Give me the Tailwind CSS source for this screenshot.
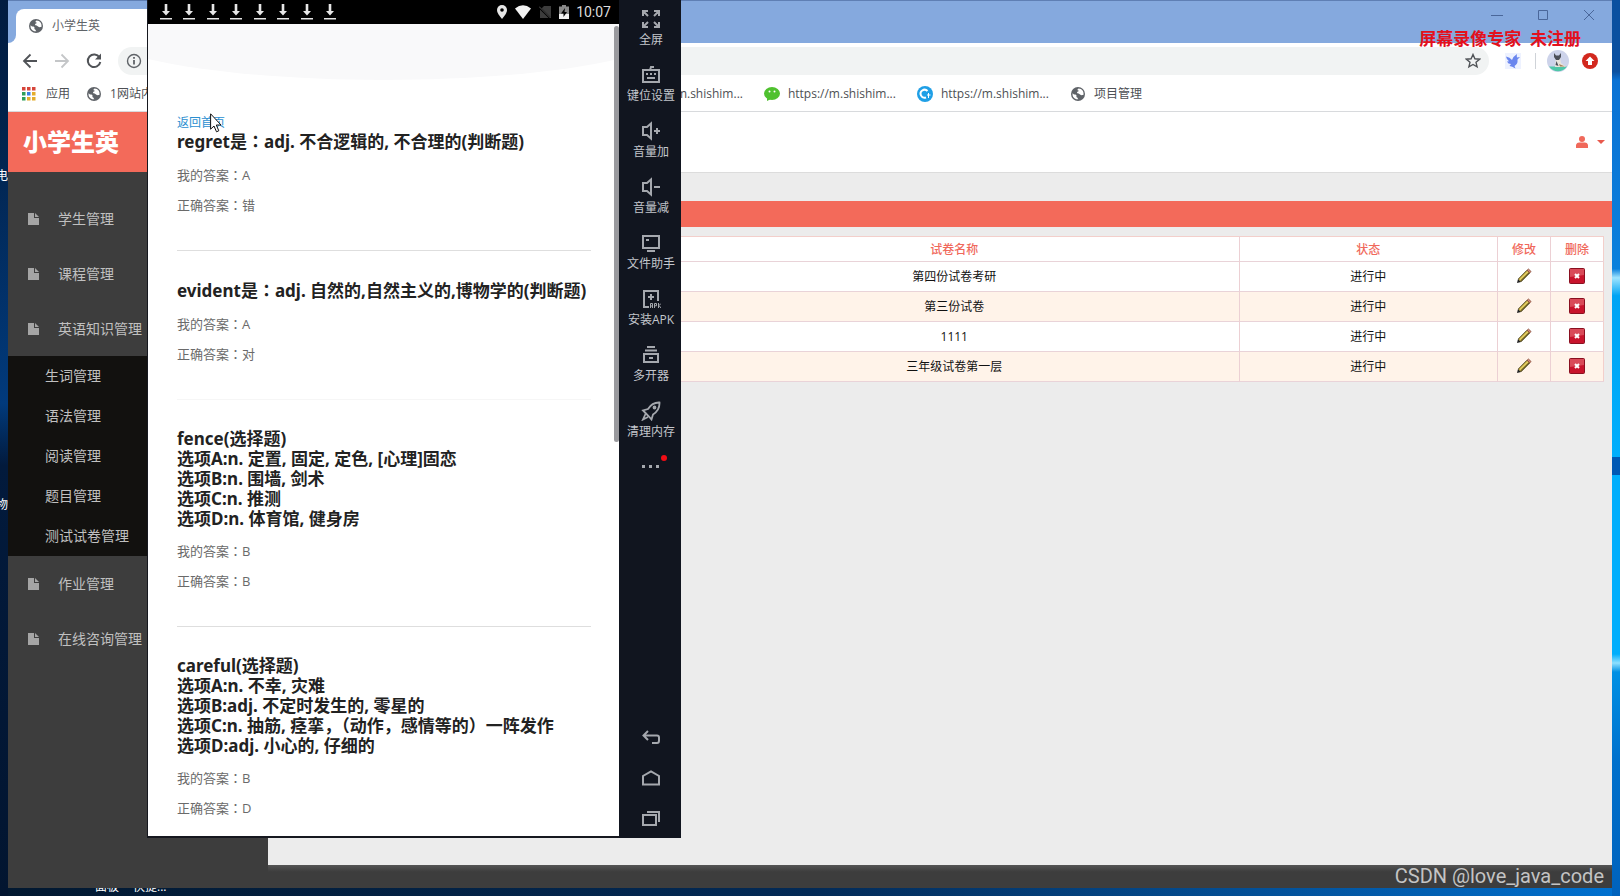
<!DOCTYPE html>
<html lang="zh-CN">
<head>
<meta charset="utf-8">
<title>小学生英</title>
<script src="https://cdn.jsdelivr.net/npm/@tailwindcss/browser@4"></script>
</head>
<body class="h-screen overflow-hidden font-['Open_Sans','Noto_Sans_CJK_SC',sans-serif] text-xs">
<svg class="hidden" aria-hidden="true">
  <symbol id="globe" viewBox="0 0 16 16"><circle cx="8" cy="8" r="7" fill="#5f6368"/><path d="M2.600 7.200c1.600 2 2.600 .6 3.600 1.800 1 1.200-.6 1.600 1 2.600 .8 .6 .4 1.400 1.200 1.600C5 13.800 2 11 2.600 7.200zM8.600 2.400c-1.800 .8-1.200 2.200.4 2.400-1.200 1.200-2.400 .6-1.800 2.400 1.200 0 2.400 .6 3.200 1.600 1 .8 2 .2 3 .2C14.200 5.500 12 2.600 8.600 2.400z" fill="#fff"/></symbol>
  <symbol id="doc" viewBox="0 0 12 14"><path d="M0 1h6v5h5v7H0zM7 1l4 4H7z" fill="#a5a5a5"/></symbol>
  <symbol id="pencil" viewBox="0 0 16 16"><path d="M1 15l1-4 3 3z" fill="#222"/><path d="M2.300 11L11 2.200l2.800 2.700-8.800 8.900z" fill="#c9ae3a" stroke="#4a4220" stroke-width=".9"/><path d="M3.500 12L12.200 3.400" stroke="#f3e48a"/><path d="M4.600 13l8.600-8.400" stroke="#4a4220"/><path d="M11 2.200L12.500 1l2.600 2.500-1.300 1.400z" fill="#d88a7a" stroke="#75402f" stroke-width=".7"/></symbol>
  <symbol id="cross" viewBox="0 0 16 16"><rect x=".5" y=".5" width="15" height="15" rx="1" fill="#c8142c" stroke="#8a1020"/><path d="M1 1h14v6L1 9z" fill="#d94a58"/><path d="M6 6l4 4M10 6l-4 4" stroke="#fff" stroke-width="2"/></symbol>
  <symbol id="dl" viewBox="0 0 12 16"><path d="M4.700 0h2.600v7H10L6 11.500 2 7h2.700zM0 14h12v1.500H0z" fill="#e6e6e6"/></symbol>
</svg>

<main class="relative h-full overflow-hidden bg-linear-to-r from-[#021830] via-[#032a56] to-[#0071d0]">
  <!-- desktop wallpaper edges -->
  <div class="absolute inset-y-0 left-0 w-2 bg-[linear-gradient(#021c40,#02234c_15%,#013a7c_45%,#021a3c_52%,#021530)]"></div>
  <div class="absolute inset-y-0 right-0 w-2 bg-[linear-gradient(#0a50a0_8%,#0a72d4_9%,#0a80dc_30%,#9fe4ff_31%,#00a4f4_33%,#00aefc_51%,#0058b4_51%,#0058b4_53%,#00aefc_53%,#00aefc_73%,#8fe0ff_74%,#0090e4_75%,#0070cc_85%,#0062bc)]"></div>
  <span class="absolute -left-1 top-[168px] leading-4 text-white">电</span>
  <span class="absolute -left-1 top-[497px] leading-4 text-white">物</span>
  <span class="absolute left-[95px] top-[879px] leading-4 text-white">面板</span>
  <span class="absolute left-[133px] top-[879px] leading-4 text-white">快捷...</span>

  <!-- browser window -->
  <section class="absolute inset-x-2 top-0 bottom-2 flex flex-col bg-white">
    <div class="flex h-[43px] shrink-0 items-end justify-between border-t border-[#5f7fb4] bg-[#85a9de]">
      <div class="flex items-end bg-white">
        <div class="h-[34px] w-2 rounded-br-lg bg-[#85a9de]"></div>
        <div class="bg-[#85a9de]">
          <div class="flex h-[34px] w-60 items-center gap-2 rounded-t-lg bg-white pl-3 text-[#5f6368]">
            <svg class="size-4"><use href="#globe"/></svg><span>小学生英</span>
          </div>
        </div>
      </div>
      <div class="flex gap-[34px] self-start pt-2 pr-[17px] text-[#4a679a]">
        <button aria-label="最小化"><svg class="size-3" viewBox="0 0 12 12" stroke="currentColor"><path d="M0 6.500h12"/></svg></button>
        <button aria-label="最大化"><svg class="size-3" viewBox="0 0 12 12" stroke="currentColor" fill="none"><path d="M1.500 1.500h9v9h-9z"/></svg></button>
        <button aria-label="关闭"><svg class="size-3" viewBox="0 0 12 12" stroke="currentColor"><path d="M1 1l10 10M11 1L1 11"/></svg></button>
      </div>
    </div>
    <div class="flex h-9 shrink-0 items-center pl-[14px] pr-[14px]">
      <div class="flex gap-4">
        <button aria-label="后退"><svg class="size-4" viewBox="0 0 16 16" fill="none" stroke="#505357" stroke-width="1.800"><path d="M15 8H2M8.500 1.500L2 8l6.500 6.500"/></svg></button>
        <button aria-label="前进"><svg class="size-4" viewBox="0 0 16 16" fill="none" stroke="#c4c6c8" stroke-width="1.800"><path d="M1 8h13M7.500 1.500L14 8l-6.500 6.500"/></svg></button>
        <button aria-label="刷新"><svg class="size-4" viewBox="0 0 16 16" fill="none" stroke="#505357" stroke-width="2"><path d="M13.500 4.500A6.300 6.300 0 1 0 14.300 9"/><path d="M15 .5v6H9z" fill="#505357" stroke="none"/></svg></button>
      </div>
      <div class="ml-4 flex h-7 flex-1 items-center justify-between rounded-full bg-[#f1f3f3] pl-2 pr-2">
        <svg class="size-4" viewBox="0 0 16 16" fill="none" stroke="#5f6368" stroke-width="1.400"><circle cx="8" cy="8" r="6.500"/><path d="M8 7v4.500M8 4v1.700" stroke-width="1.800"/></svg>
        <svg class="size-4" viewBox="0 0 16 16" fill="none" stroke="#505357" stroke-width="1.400"><path d="M8 1.500l1.900 4.300 4.700.4-3.600 3.100 1.100 4.600L8 11.500l-4.100 2.400L5 9.300 1.400 6.200l4.700-.4z"/></svg>
      </div>
      <div class="ml-4 flex items-center">
        <svg class="size-4" viewBox="0 0 16 16"><path fill="#eef2ff" d="M0 0h16v16H0z"/><path d="M1 3.500q4 .5 6 3.500 1-3.500 5-6-.5 2 0 3.500l3-.5-2.500 2.500Q13 11 9.500 13l1 2.500Q7 13 4.500 13L6 11Q3 11 2 8.500l2-.3Q1.500 6.500 1 3.500z" fill="#6a86ee"/></svg>
        <span class="ml-[14px] h-4 w-px bg-[#cfd3d8]"></span>
        <svg class="ml-[11px] size-[22px]" viewBox="0 0 22 22"><circle cx="11" cy="11" r="11" fill="#cdd3ea"/><path d="M2 16.500h18a11 11 0 0 1-18 0z" fill="#4fc7a8"/><path d="M9 8h4l1 5 5 4H8z" fill="#e9e4dc"/><path d="M7 3l2 2.500h3L14 3v4l-2 3H9L7 7zM8.500 15l1-4 2 5z" fill="#4b4f58"/><path d="M12 14l6 2.500h-5z" fill="#a8845a"/></svg>
        <svg class="ml-[13px] size-4" viewBox="0 0 16 16"><circle cx="8" cy="8" r="8" fill="#d2281e"/><path d="M8 3.500L12.500 8H10v4H6V8H3.500z" fill="#fff"/></svg>
      </div>
    </div>
    <nav class="flex h-[33px] shrink-0 items-center border-b border-[#d8dadd] pb-[6px] pl-[14px] pt-1 text-[#4d5054]" aria-label="书签">
      <a href="#" class="flex items-center gap-[10px]">
        <svg class="size-[14px]" viewBox="0 0 14 14"><path d="M0 0h3.500v3.500H0zM5 0h3.500v3.500H5zM10 0h3.500v3.500H10z" fill="#d6453a"/><path d="M0 5h3.500v3.500H0zM0 10h3.500v3.500H0z" fill="#2f9e58"/><path d="M5 5h3.500v3.500H5z" fill="#3b7de0"/><path d="M10 5h3.500v3.500H10zM5 10h3.500v3.500H5zM10 10h3.500v3.500H10z" fill="#e3ac2b"/></svg>应用</a>
      <a href="#" class="ml-4 flex items-center gap-2"><svg class="size-4"><use href="#globe"/></svg>1网站内</a>
      <div class="ml-[523px] flex items-center gap-[21px]">
        <a href="#">m.shishim...</a>
        <a href="#" class="flex items-center gap-2"><svg class="size-4" viewBox="0 0 16 16"><ellipse cx="8" cy="7.500" rx="8" ry="6.500" fill="#4fc12f"/><path d="M3 12v3l4-2z" fill="#4fc12f"/><circle cx="5.500" cy="5.500" r="1" fill="#fff"/><circle cx="10.500" cy="5.500" r="1" fill="#fff"/></svg>https://m.shishim...</a>
        <a href="#" class="flex items-center gap-2"><svg class="size-4" viewBox="0 0 16 16"><circle cx="8" cy="8" r="8" fill="#1f9fe6"/><path d="M10.500 5A4 4 0 1 0 9 11.500" fill="none" stroke="#fff" stroke-width="2"/><path d="M11.500 7v5M10 9h3.500" stroke="#fff"/></svg>https://m.shishim...</a>
        <a href="#" class="flex items-center gap-2"><svg class="size-4"><use href="#globe"/></svg>项目管理</a>
      </div>
    </nav>

    <div class="flex min-h-0 flex-1 bg-[#3d3d3d]">
      <aside class="w-[260px] shrink-0 text-sm text-[#c0c0c0]">
        <h1 class="flex h-[60px] items-center bg-[#f36a5a] pl-[15px] text-2xl font-black text-white">小学生英</h1>
        <nav class="pt-[19px]">
          <a href="#" class="flex h-[55px] items-center gap-[18px] pl-5"><svg class="h-[14px] w-3"><use href="#doc"/></svg>学生管理</a>
          <a href="#" class="flex h-[55px] items-center gap-[18px] pl-5"><svg class="h-[14px] w-3"><use href="#doc"/></svg>课程管理</a>
          <a href="#" class="flex h-[55px] items-center gap-[18px] pl-5"><svg class="h-[14px] w-3"><use href="#doc"/></svg>英语知识管理</a>
          <div class="bg-[#12110f]">
            <a href="#" class="flex h-10 items-center pl-[37px]">生词管理</a>
            <a href="#" class="flex h-10 items-center pl-[37px]">语法管理</a>
            <a href="#" class="flex h-10 items-center pl-[37px]">阅读管理</a>
            <a href="#" class="flex h-10 items-center pl-[37px]">题目管理</a>
            <a href="#" class="flex h-10 items-center pl-[37px]">测试试卷管理</a>
          </div>
          <a href="#" class="flex h-[55px] items-center gap-[18px] pl-5"><svg class="h-[14px] w-3"><use href="#doc"/></svg>作业管理</a>
          <a href="#" class="flex h-[55px] items-center gap-[18px] pl-5"><svg class="h-[14px] w-3"><use href="#doc"/></svg>在线咨询管理</a>
        </nav>
      </aside>
      <div class="flex min-w-0 flex-1 flex-col">
        <header class="flex h-[61px] shrink-0 items-center justify-end border-b border-[#dcdcdc] bg-white pr-[7px]">
          <button class="flex items-center gap-[9px]" aria-label="用户">
            <svg class="h-3 w-3" viewBox="0 0 12 12"><circle cx="6" cy="3" r="3" fill="#f0695b"/><path d="M0 12V8.500Q1 6.500 3 6.500h6q2 0 3 2V12z" fill="#f0695b"/></svg>
            <svg class="h-1 w-2" viewBox="0 0 8 4"><path d="M0 0h8L4 4z" fill="#e8594c"/></svg>
          </button>
        </header>
        <div class="flex-1 bg-[#ececec] pt-7">
          <div class="h-[26px] bg-[#f36a5a]"></div>
          <div class="pl-[10px] pr-2 pt-[9px]">
            <table class="w-full table-fixed border-collapse border border-[#f3cfcb] text-center text-[#111]">
              <colgroup><col class="w-[29.5%]"><col class="w-[43%]"><col class="w-[19.5%]"><col class="w-[4%]"><col class="w-[4%]"></colgroup>
              <thead><tr class="h-[25px] border-b border-[#e9d3d8] bg-white text-[#f0695b]">
                <th></th><th class="border-x border-[#ecd0d4] pt-[2px] font-medium">试卷名称</th><th class="border-x border-[#ecd0d4] pt-[2px] font-medium">状态</th><th class="border-x border-[#ecd0d4] pt-[2px] font-medium">修改</th><th class="pt-[2px] font-medium">删除</th></tr></thead>
              <tbody>
                <tr class="h-[30px] border-b border-[#e9d3d8] bg-white"><td></td><td class="border-x border-[#ecd0d4]">第四份试卷考研</td><td class="border-x border-[#ecd0d4]">进行中</td><td class="border-x border-[#ecd0d4] pb-[2px]"><button aria-label="修改" class="block mx-auto"><svg class="size-4"><use href="#pencil"/></svg></button></td><td class="pb-[2px]"><button aria-label="删除" class="block mx-auto"><svg class="size-4"><use href="#cross"/></svg></button></td></tr>
                <tr class="h-[30px] border-b border-[#e9d3d8] bg-[#fff3e9]"><td></td><td class="border-x border-[#ecd0d4]">第三份试卷</td><td class="border-x border-[#ecd0d4]">进行中</td><td class="border-x border-[#ecd0d4] pb-[2px]"><button aria-label="修改" class="block mx-auto"><svg class="size-4"><use href="#pencil"/></svg></button></td><td class="pb-[2px]"><button aria-label="删除" class="block mx-auto"><svg class="size-4"><use href="#cross"/></svg></button></td></tr>
                <tr class="h-[30px] border-b border-[#e9d3d8] bg-white"><td></td><td class="border-x border-[#ecd0d4]">1111</td><td class="border-x border-[#ecd0d4]">进行中</td><td class="border-x border-[#ecd0d4] pb-[2px]"><button aria-label="修改" class="block mx-auto"><svg class="size-4"><use href="#pencil"/></svg></button></td><td class="pb-[2px]"><button aria-label="删除" class="block mx-auto"><svg class="size-4"><use href="#cross"/></svg></button></td></tr>
                <tr class="h-[30px] border-b border-[#e9d3d8] bg-[#fff3e9]"><td></td><td class="border-x border-[#ecd0d4]">三年级试卷第一层</td><td class="border-x border-[#ecd0d4]">进行中</td><td class="border-x border-[#ecd0d4] pb-[2px]"><button aria-label="修改" class="block mx-auto"><svg class="size-4"><use href="#pencil"/></svg></button></td><td class="pb-[2px]"><button aria-label="删除" class="block mx-auto"><svg class="size-4"><use href="#cross"/></svg></button></td></tr>
              </tbody>
            </table>
          </div>
        </div>
        <div class="h-[23px] shrink-0 bg-linear-to-b from-[#555] to-[#3d3d3d] to-30%"></div>
      </div>
    </div>
  </section>

  <!-- phone emulator window -->
  <section class="absolute bottom-[58px] left-[147px] top-0 flex w-[534px] border-l border-[#16181f] bg-[#16181f]">
    <div class="flex min-w-0 flex-1 flex-col pb-[2px]">
      <div class="flex h-6 shrink-0 items-center justify-between bg-black pl-3 pr-2 font-['Roboto',sans-serif] text-[#dcdcdc]">
        <div class="flex w-44 justify-between">
          <svg class="h-4 w-3"><use href="#dl"/></svg><svg class="h-4 w-3"><use href="#dl"/></svg><svg class="h-4 w-3"><use href="#dl"/></svg><svg class="h-4 w-3"><use href="#dl"/></svg><svg class="h-4 w-3"><use href="#dl"/></svg><svg class="h-4 w-3"><use href="#dl"/></svg><svg class="h-4 w-3"><use href="#dl"/></svg><svg class="h-4 w-3"><use href="#dl"/></svg>
        </div>
        <div class="flex items-center">
          <svg class="h-[14px] w-[10px]" viewBox="0 0 10 14"><path d="M5 0a5 5 0 0 1 5 5c0 3.500-5 9-5 9S0 8.500 0 5a5 5 0 0 1 5-5z" fill="#e6e6e6"/><circle cx="5" cy="5" r="1.800" fill="#000"/></svg>
          <svg class="ml-2 h-[14px] w-4" viewBox="0 0 16 14"><path d="M8 14L0 3.500Q8-3 16 3.500z" fill="#f2f2f2"/></svg>
          <svg class="ml-2 size-3" viewBox="0 0 12 12"><path d="M5 0h7v12H1V4z" fill="#3c3c3c"/><path d="M0 1l11 11" stroke="#000" stroke-width="2"/><path d="M0 .5L11.500 12" stroke="#555"/></svg>
          <svg class="ml-2 h-[14px] w-[10px]" viewBox="0 0 10 14"><path d="M3 0h4v1.500h3V14H0V1.500h3z" fill="#8a8a8a"/><path d="M0 9h10v5H0z" fill="#f0f0f0"/><path d="M6 3L2 8.500h2.500V12L8 7H5.500z" fill="#000"/></svg>
          <span class="ml-[7px] text-sm">10:07</span>
        </div>
      </div>
      <div class="relative min-h-0 flex-1 overflow-hidden bg-white pl-[29px] pr-7 text-[13px] text-[#6a6a6a]">
        <svg class="absolute inset-x-0 top-0 h-14 w-full" viewBox="0 0 466 56" preserveAspectRatio="none"><path d="M0 0h466v35C346 63 120 63 0 35z" fill="#f9f9fa"/></svg>
        <div class="absolute right-0 top-[2px] h-[416px] w-[5px] rounded-sm bg-[#9a9a9e]"></div>
        <a href="#" class="mt-[90px] block text-xs leading-[17px] text-[#2b8fd0]">返回首页</a>
        <article class="border-b border-[#dedede] pb-[35px]">
          <h2 class="whitespace-nowrap font-['Noto_Sans','Noto_Sans_CJK_SC',sans-serif] text-[17px] font-bold leading-5 text-[#222]">regret是<span lang="zh-TW" class="font-['Noto_Sans_CJK_TC']">：</span>adj. 不合逻辑的, 不合理的(判断题)</h2>
          <p class="mt-[13px] leading-5">我的答案<span lang="zh-TW" class="font-['Noto_Sans_CJK_TC']">：</span>A</p><p class="mt-[10px] leading-5">正确答案<span lang="zh-TW" class="font-['Noto_Sans_CJK_TC']">：</span>错</p>
        </article>
        <article class="border-b border-[#f6f6f6] pb-[35px] pt-[29px]">
          <h2 class="whitespace-nowrap font-['Noto_Sans','Noto_Sans_CJK_SC',sans-serif] text-[17px] font-bold leading-5 text-[#222]">evident是<span lang="zh-TW" class="font-['Noto_Sans_CJK_TC']">：</span>adj. 自然的,自然主义的,博物学的(判断题)</h2>
          <p class="mt-[13px] leading-5">我的答案<span lang="zh-TW" class="font-['Noto_Sans_CJK_TC']">：</span>A</p><p class="mt-[10px] leading-5">正确答案<span lang="zh-TW" class="font-['Noto_Sans_CJK_TC']">：</span>对</p>
        </article>
        <article class="border-b border-[#dedede] pb-[35px] pt-[29px]">
          <h2 class="whitespace-nowrap font-['Noto_Sans','Noto_Sans_CJK_SC',sans-serif] text-[17px] font-bold leading-5 text-[#222]">fence(选择题)<br>选项A:n. 定置, 固定, 定色, [心理]固恋<br>选项B:n. 围墙, 剑术<br>选项C:n. 推测<br>选项D:n. 体育馆, 健身房</h2>
          <p class="mt-3 leading-5">我的答案<span lang="zh-TW" class="font-['Noto_Sans_CJK_TC']">：</span>B</p><p class="mt-[10px] leading-5">正确答案<span lang="zh-TW" class="font-['Noto_Sans_CJK_TC']">：</span>B</p>
        </article>
        <article class="pt-[29px]">
          <h2 class="whitespace-nowrap font-['Noto_Sans','Noto_Sans_CJK_SC',sans-serif] text-[17px] font-bold leading-5 text-[#222]">careful(选择题)<br>选项A:n. 不幸, 灾难<br>选项B:adj. 不定时发生的, 零星的<br>选项C:n. 抽筋, 痉挛，（动作，感情等的）一阵发作<br>选项D:adj. 小心的, 仔细的</h2>
          <p class="mt-3 leading-5">我的答案<span lang="zh-TW" class="font-['Noto_Sans_CJK_TC']">：</span>B</p><p class="mt-[10px] leading-5">正确答案<span lang="zh-TW" class="font-['Noto_Sans_CJK_TC']">：</span>D</p>
        </article>
      </div>
    </div>
    <div class="flex w-[62px] shrink-0 flex-col bg-[#11151f] pl-[2px] text-[#c3c6cc]">
      <button class="flex h-14 flex-col items-center gap-[3px] pt-[9px]"><svg class="size-5" viewBox="0 0 20 20" fill="none" stroke="#a5a8ae" stroke-width="2"><path d="M2 7V2h5M2 2l5 5M13 2h5v5M18 2l-5 5M2 13v5h5M2 18l5-5M13 18h5v-5M18 18l-5-5"/></svg><span class="leading-4">全屏</span></button>
      <button class="flex h-14 flex-col items-center gap-[3px] pt-[9px]"><svg class="size-5" viewBox="0 0 20 20" fill="none" stroke="#a5a8ae" stroke-width="2"><path d="M2 5h16v12H2zM9 5l1-3h3M5 9h2M9 9h2M13 9h2M6 13h8"/></svg><span class="leading-4">键位设置</span></button>
      <button class="flex h-14 flex-col items-center gap-[3px] pt-[9px]"><svg class="size-5" viewBox="0 0 20 20" fill="none" stroke="#a5a8ae" stroke-width="2"><path d="M2 6h4l4-3.500v15L6 14H2zM13 10h6M16 7v6"/></svg><span class="leading-4">音量加</span></button>
      <button class="flex h-14 flex-col items-center gap-[3px] pt-[9px]"><svg class="size-5" viewBox="0 0 20 20" fill="none" stroke="#a5a8ae" stroke-width="2"><path d="M2 6h4l4-3.500v15L6 14H2zM13 10h6"/></svg><span class="leading-4">音量减</span></button>
      <button class="flex h-14 flex-col items-center gap-[3px] pt-[9px]"><svg class="size-5" viewBox="0 0 20 20" fill="none" stroke="#a5a8ae" stroke-width="2"><path d="M2 3h16v12H2zM6 18h8M5 7h3"/></svg><span class="leading-4">文件助手</span></button>
      <button class="flex h-14 flex-col items-center gap-[3px] pt-[9px]"><svg class="size-5" viewBox="0 0 20 20" fill="none" stroke="#a5a8ae" stroke-width="2"><path d="M8 18H3V2h14v10M10 5v6M7 8h6"/><path d="M9.500 19v-4.500h2V19M9.500 17h2M13.500 19v-4.500h2v2.300h-2M17.500 14v5M20 14.500l-2 2 2 2.500" stroke-width="1"/></svg><span class="leading-4">安装APK</span></button>
      <button class="flex h-14 flex-col items-center gap-[3px] pt-[9px]"><svg class="size-5" viewBox="0 0 20 20" fill="none" stroke="#a5a8ae" stroke-width="2"><path d="M3 9h14v8H3zM4 5.500h12M6 2h8M8 13h4"/></svg><span class="leading-4">多开器</span></button>
      <button class="flex h-14 flex-col items-center gap-[3px] pt-[9px]"><svg class="size-5" viewBox="0 0 20 20" fill="none" stroke="#a5a8ae" stroke-width="1.800"><path d="M18.500 1.500c-6-.3-9 2.500-11.500 6.500L2 9.500 4.500 12 8 15.500l2.500 3 1.500-5c4-2.500 6.800-6 6.500-12zM4.500 13L2 18.500 7 16"/><circle cx="13.500" cy="6.500" r="1"/></svg><span class="leading-4">清理内存</span></button>
      <button class="relative mt-[5px] flex h-6 items-center justify-center pt-1" aria-label="更多"><svg class="h-1 w-[18px]" viewBox="0 0 18 4" fill="#a5a8ae"><path d="M0 0h3v3H0zM7 0h3v3H7zM14 0h3v3h-3z"/></svg><span class="absolute right-[14px] top-[2px] size-[6px] rounded-full bg-[#f20d15]"></span></button>
      <div class="mt-auto flex flex-col items-center gap-5 pb-[10px]">
        <button aria-label="返回"><svg class="block size-5" viewBox="0 0 20 20" fill="none" stroke="#a5a8ae" stroke-width="2"><path d="M7 3L2.500 7.500 7 12M3 7.500h13q2 0 2 2v3q0 2.500-2 2.500h-5"/></svg></button>
        <button aria-label="主页"><svg class="block size-5" viewBox="0 0 20 20" fill="none" stroke="#a5a8ae" stroke-width="2"><path d="M2 16.500V8l8-4.500L18 8v8.500z"/></svg></button>
        <button aria-label="最近任务"><svg class="block size-5" viewBox="0 0 20 20" fill="none" stroke="#a5a8ae" stroke-width="2"><path d="M2 7h13v10H2zM6 4h12v10"/></svg></button>
      </div>
    </div>
  </section>

  <svg class="absolute left-[210px] top-[113px] h-5 w-3" viewBox="0 0 12 20"><path d="M.6.8v15.400L4 13l2.500 5.800 2.300-1L6.300 12H11z" fill="#fff" stroke="#111"/></svg>
  <p class="absolute right-[39px] top-[27px] text-[17px] font-bold leading-6 text-[#e3101c]">屏幕录像专家&nbsp; 未注册</p>
  <p class="absolute bottom-2 right-4 font-['Roboto',sans-serif] text-xl leading-6 text-[#c4c4c4]">CSDN @love_java_code</p>
</main>
</body>
</html>
